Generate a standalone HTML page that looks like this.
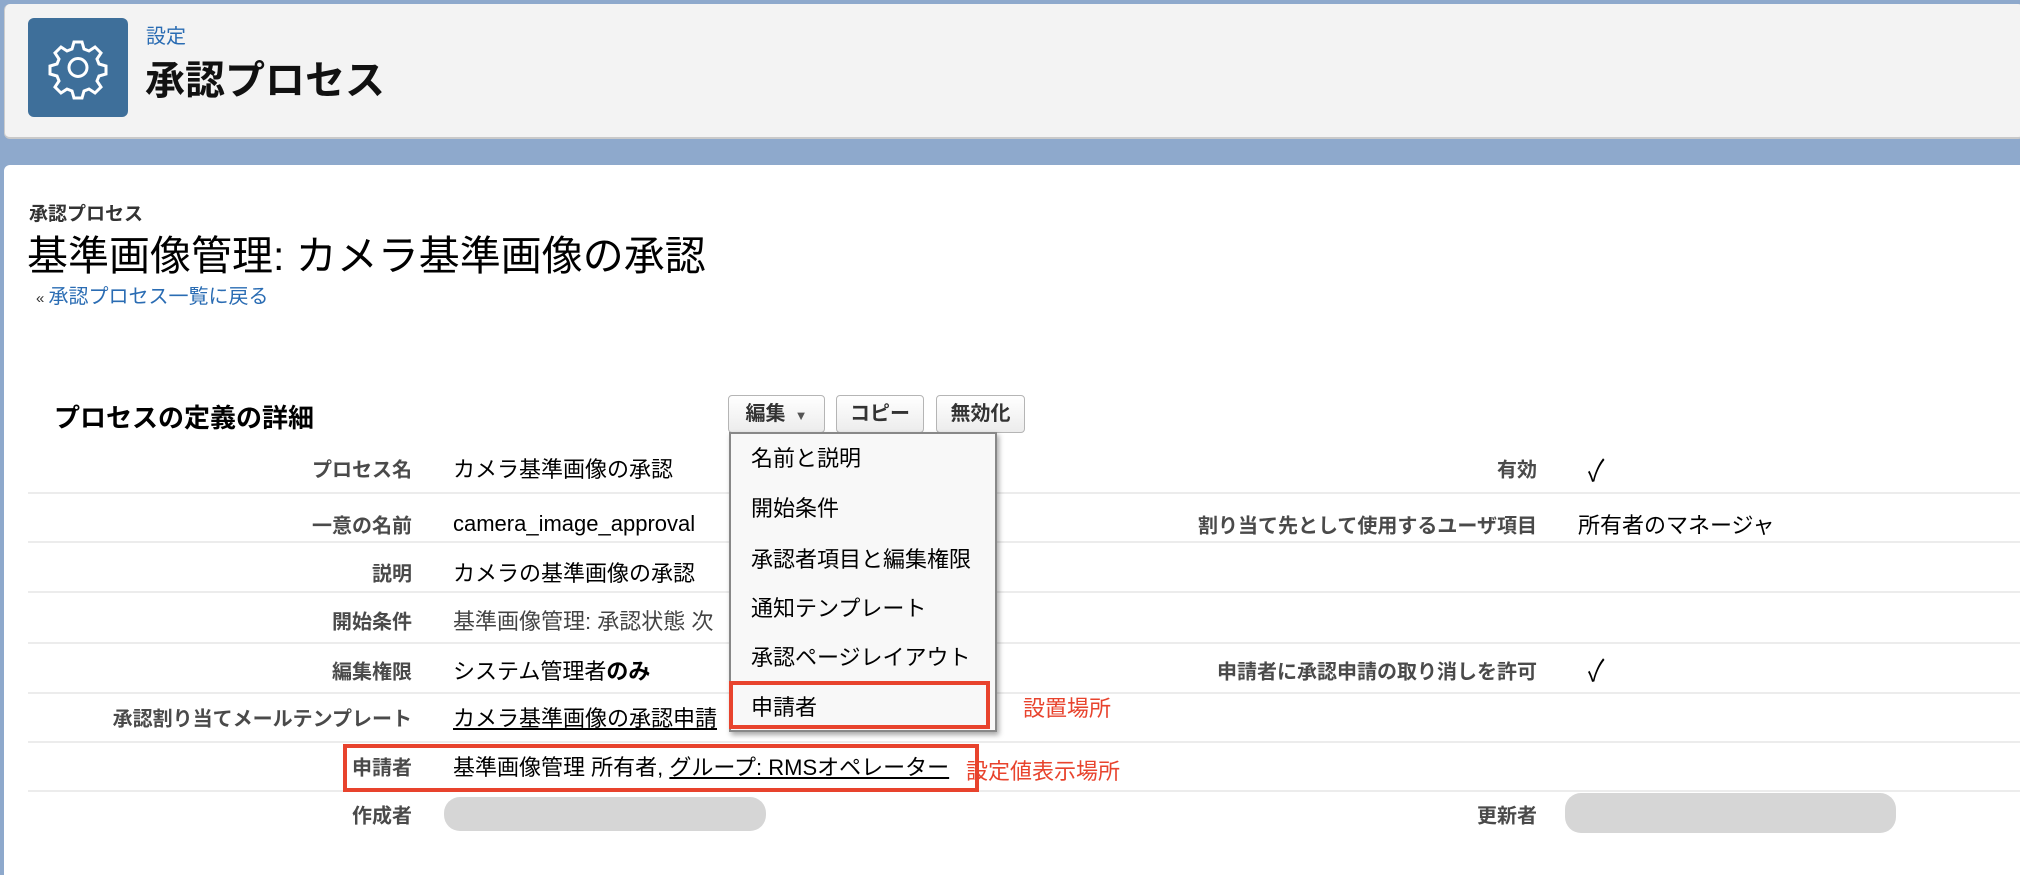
<!DOCTYPE html>
<html><head><meta charset="utf-8"><style>
*{margin:0;padding:0;box-sizing:border-box}
body{width:2020px;height:872px;overflow:hidden;background:#8ea9cc;font-family:"Liberation Sans","Noto Sans CJK JP",sans-serif;position:relative;color:#000}
.a{position:absolute;white-space:nowrap}
#hdr{position:absolute;left:4px;top:4px;width:2020px;height:135px;background:#f3f3f3;border-radius:6px;border-bottom:2px solid #c9c9c9;border-left:1px solid #ccc}
#icon{position:absolute;left:28px;top:18px;width:100px;height:99px;background:#3e6f9a;border-radius:6px}
#panel{position:absolute;left:4px;top:165px;width:2020px;height:710px;background:#fff;border-radius:6px 0 0 0}
.sep{position:absolute;left:28px;width:1992px;height:2px;background:#ececec}
.lab{position:absolute;right:1608px;font-size:20px;font-weight:bold;color:#4a4a4a;white-space:nowrap;transform:translateY(-50%)}
.lab2{position:absolute;right:483px;font-size:20px;font-weight:bold;color:#4a4a4a;white-space:nowrap;transform:translateY(-50%)}
.val{position:absolute;left:453px;font-size:22px;white-space:nowrap;transform:translateY(-50%)}
.btn{position:absolute;top:395px;height:38px;border:1px solid #b5b5b5;border-radius:4px;background:linear-gradient(#fff,#ececec);font-size:20px;font-weight:bold;color:#333;text-align:center;line-height:36px}
#menu{position:absolute;left:729px;top:432px;width:268px;height:300px;background:#f8f8f8;border:2px solid #888;box-shadow:2px 3px 5px rgba(0,0,0,.35)}
.mi{position:absolute;left:20px;font-size:22px;transform:translateY(-50%);white-space:nowrap}
.red{position:absolute;border:4px solid #e8432d}
.rt{position:absolute;color:#e8432d;font-size:22px;white-space:nowrap;transform:translateY(-50%)}
.blob{position:absolute;background:#d6d6d6;border-radius:16px}
.chk{position:absolute;font-size:30px;transform:translateY(-50%) scaleX(.8)}
</style></head><body>
<div id="hdr"></div>
<div id="icon"><svg width="100" height="99" viewBox="0 0 100 99"><g fill="none" stroke="#fff" stroke-width="3"><path d="M46 24h8l2 7 5 2 6-4 6 6-4 6 2 5 7 2v8l-7 2-2 5 4 6-6 6-6-4-5 2-2 7h-8l-2-7-5-2-6 4-6-6 4-6-2-5-7-2v-8l7-2 2-5-4-6 6-6 6 4 5-2z"/><circle cx="50" cy="49.5" r="9"/></g></svg></div>
<div class="a" style="left:146px;top:20px;font-size:20px;color:#2a6cb3">設定</div>
<div class="a" style="left:145px;top:48px;font-size:40px;font-weight:bold;color:#111">承認プロセス</div>
<div id="panel"></div>
<div class="a" style="left:29px;top:199px;font-size:19px;font-weight:bold;color:#333">承認プロセス</div>
<div class="a" style="left:27px;top:222px;font-size:41px;color:#000">基準画像管理: カメラ基準画像の承認</div>
<div class="a" style="left:36px;top:280px;font-size:20px;color:#2a6cb3"><span style="color:#333;font-size:15px">« </span>承認プロセス一覧に戻る</div>
<div class="a" style="left:54px;top:398px;font-size:26px;font-weight:bold;color:#000">プロセスの定義の詳細</div>
<div class="btn" style="left:728px;width:97px">編集 <span style="font-size:13px;color:#555">&nbsp;▼</span></div>
<div class="btn" style="left:836px;width:88px">コピー</div>
<div class="btn" style="left:936px;width:89px">無効化</div>
<div class="sep" style="top:492px"></div><div class="sep" style="top:541px"></div><div class="sep" style="top:591px"></div><div class="sep" style="top:642px"></div><div class="sep" style="top:692px"></div><div class="sep" style="top:741px"></div><div class="sep" style="top:790px"></div>
<div class="lab" style="top:468px">プロセス名</div><div class="val" style="top:468px">カメラ基準画像の承認</div>
<div class="lab" style="top:524px">一意の名前</div><div class="val" style="top:524px">camera_image_approval</div>
<div class="lab" style="top:572px">説明</div><div class="val" style="top:572px">カメラの基準画像の承認</div>
<div class="lab" style="top:620px">開始条件</div><div class="val" style="top:620px;color:#444">基準画像管理: 承認状態 次</div>
<div class="lab" style="top:670px">編集権限</div><div class="val" style="top:670px">システム管理者<b>のみ</b></div>
<div class="lab" style="top:717px">承認割り当てメールテンプレート</div><div class="val" style="top:717px;text-decoration:underline">カメラ基準画像の承認申請</div>
<div class="lab" style="top:766px">申請者</div><div class="val" style="top:766px">基準画像管理 所有者, <u>グループ: RMSオペレーター</u></div>
<div class="lab" style="top:814px">作成者</div>
<div class="lab2" style="top:468px">有効</div><div class="chk" style="left:1586px;top:468px">✓</div>
<div class="lab2" style="top:524px">割り当て先として使用するユーザ項目</div><div class="val" style="left:1578px;top:524px">所有者のマネージャ</div>
<div class="lab2" style="top:670px">申請者に承認申請の取り消しを許可</div><div class="chk" style="left:1586px;top:668px">✓</div>
<div class="lab2" style="top:814px">更新者</div>
<div class="blob" style="left:444px;top:797px;width:322px;height:34px"></div>
<div class="blob" style="left:1565px;top:793px;width:331px;height:40px"></div>
<div id="menu">
<div class="mi" style="top:23px">名前と説明</div>
<div class="mi" style="top:73px">開始条件</div>
<div class="mi" style="top:124px">承認者項目と編集権限</div>
<div class="mi" style="top:173px">通知テンプレート</div>
<div class="mi" style="top:222px">承認ページレイアウト</div>
<div class="mi" style="top:272px">申請者</div>
</div>
<div class="red" style="left:729px;top:681px;width:261px;height:48px"></div>
<div class="red" style="left:343px;top:744px;width:636px;height:48px"></div>
<div class="rt" style="left:1023px;top:707px">設置場所</div>
<div class="rt" style="left:966px;top:770px">設定値表示場所</div>
</body></html>
